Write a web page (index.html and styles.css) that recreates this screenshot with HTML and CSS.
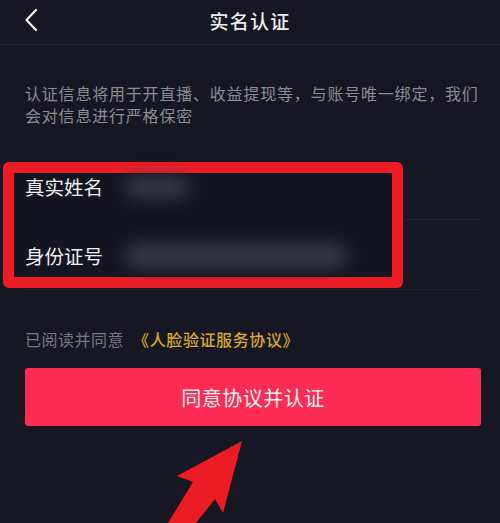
FILE: index.html
```html
<!DOCTYPE html>
<html lang="zh-CN">

<head>
    <meta charset="UTF-8">
    <meta name="viewport" content="width=device-width, initial-scale=1.0">
    <title>实名认证</title>

    <link rel="stylesheet" href="styles.css">
</head>

<body>

    <div class="header">
        <div class="back">
            <svg width="14" height="24" viewBox="0 0 14 24">
                <path d="M12 2 L2.5 12 L12 22" fill="none" stroke="#f2f2f2" stroke-width="2.2" stroke-linecap="round" stroke-linejoin="round" />
            </svg>
        </div>
        <h1 class="title">实名认证</h1>
    </div>

    <p class="desc">认证信息将用于开直播、收益提现等，与账号唯一绑定，我们会对信息进行严格保密</p>

    <div class="form">
        <div class="row">
            <span class="label">真实姓名</span>
            <span class="blur blur-name"></span>
        </div>
        <div class="row">
            <span class="label">身份证号</span>
            <span class="blur blur-id"></span>
        </div>

        <!-- annotation box -->
        <div class="mark"></div>
    </div>

    <p class="agree">已阅读并同意 <span class="link">《人脸验证服务协议》</span></p>

    <div class="action">
        <button class="btn">同意协议并认证</button>

        <!-- annotation arrow -->
        <svg class="arrow" width="90" height="90" viewBox="0 0 90 90">
            <polygon points="82,1 63,73 55,59 36,83 8,83 33,42 17,36" fill="#ec1c24" />
        </svg>
    </div>

</body>

</html>
```

FILE: styles.css
```css
*,
*::before,
*::after {
    margin: 0;
    padding: 0;
    box-sizing: border-box;
}

body {
    background-color: #161722;
    font-family: "Noto Sans CJK SC", "Noto Sans", sans-serif;
    height: 523px;
    overflow: hidden;
}

.header {
    height: 45px;
    border-bottom: 1px solid #22232d;
    display: flex;
    align-items: center;
    justify-content: center;
    position: relative;
}

.back {
    position: absolute;
    left: 24px;
    top: 8px;
    height: 24px;
}

.title {
    color: #ededee;
    font-size: 19px;
    font-weight: 500;
    letter-spacing: 1.3px;
    margin-top: -4px;
}

.desc {
    color: #8a8b91;
    font-size: 16px;
    line-height: 22px;
    letter-spacing: 0.8px;
    padding: 37px 18px 0 25px;
}

.form {
    position: relative;
    margin-top: 24px;
}

.row {
    height: 70px;
    margin: 0 20px 0 25px;
    border-bottom: 1px solid #21222c;
    display: flex;
    align-items: center;
}

.row:first-child {
    padding-top: 4px;
}

.row:nth-child(2) {
    padding-top: 2px;
}

.label {
    position: relative;
    z-index: 2;
    color: #eeeeef;
    font-size: 19.5px;
    width: 90px;
    flex-shrink: 0;
}

.blur {
    position: relative;
    z-index: 2;
    display: block;
    background-color: #40424c;
    filter: blur(9px);
    border-radius: 10px;
}

.blur-name {
    width: 64px;
    height: 20px;
    margin-left: 10px;
    opacity: 0.85;
}

.blur-id {
    width: 222px;
    height: 24px;
    margin-left: 10px;
    opacity: 0.8;
}

.mark {
    position: absolute;
    z-index: 1;
    left: 3px;
    top: 12px;
    width: 400px;
    height: 126px;
    border: 11px solid #ec1c24;
    border-radius: 6px;
    background-color: #141520;
}

.agree {
    color: #77787f;
    font-size: 16px;
    line-height: 22px;
    letter-spacing: 0.5px;
    padding-left: 25px;
    margin-top: 38px;
}

.link {
    color: #d8a72c;
    font-weight: 500;
    margin-left: 5px;
    letter-spacing: 0.6px;
}

.action {
    position: relative;
    padding: 18px 19px 0 25px;
}

.btn {
    display: block;
    width: 100%;
    height: 58px;
    border: none;
    border-radius: 3px;
    background-color: #fe2c55;
    color: #f7f0f2;
    font-family: "Noto Sans CJK SC", "Noto Sans", sans-serif;
    font-size: 20px;
    letter-spacing: 0.5px;
}

.arrow {
    position: absolute;
    left: 160px;
    top: 90px;
}
```
